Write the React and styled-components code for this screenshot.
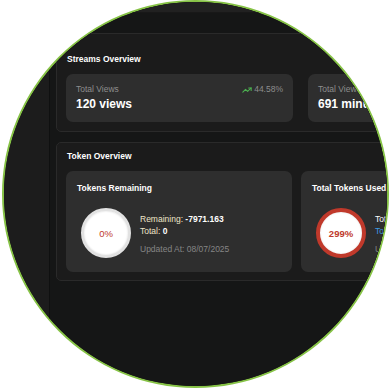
import React from 'react'
import styled, { createGlobalStyle } from 'styled-components'
import { TrendingUp } from 'lucide-react'

const GlobalStyle = createGlobalStyle`
  html, body {
    margin: 0;
    padding: 0;
    background: #ffffff;
  }
  body {
    font-family: "Liberation Sans", Arial, sans-serif;
  }
`

const streams = [
  { label: 'Total Views', value: '120 views', trend: '44.58%' },
  { label: 'Total Viewing Time', value: '691 minutes', trend: '12.40%' },
]

const App = () => {
  return (
    <>
      <GlobalStyle />
      <Lens>
        <Screen>
          <Sidebar />
          <Main>
            <TopBar />
            <Content>
              <Panel $top={20} $bottom={9}>
                <PanelTitle>Streams Overview</PanelTitle>
                <StatRow>
                  {streams.map((s) => (
                    <StatCard key={s.label}>
                      <StatHead>
                        <StatLabel>{s.label}</StatLabel>
                        <Trend>
                          <TrendingUp size={10} strokeWidth={2.6} color="#4caf50" />
                          {s.trend}
                        </Trend>
                      </StatHead>
                      <StatValue>{s.value}</StatValue>
                    </StatCard>
                  ))}
                </StatRow>
              </Panel>

              <Panel $top={8} $bottom={8}>
                <PanelTitle>Token Overview</PanelTitle>
                <TokenRow>
                  <TokenCard>
                    <CardTitle>Tokens Remaining</CardTitle>
                    <TokenBody>
                      <Gauge $ring="#e2e2e2" $width={3}>0%</Gauge>
                      <Info>
                        <Line>
                          Remaining: <b>-7971.163</b>
                        </Line>
                        <Line>
                          Total: <b>0</b>
                        </Line>
                        <Updated>Updated At: 08/07/2025</Updated>
                      </Info>
                    </TokenBody>
                  </TokenCard>
                  <TokenCard>
                    <CardTitle>Total Tokens Used</CardTitle>
                    <TokenBody>
                      <Gauge $ring="#c0392b" $width={4} $bold>299%</Gauge>
                      <Info>
                        <Line $color="#ffffff">
                          Total Used: <b>23816.837</b>
                        </Line>
                        <Line $color="#3d9be0">
                          Total Limit: <b>7971.163</b>
                        </Line>
                        <Updated>Updated At: 08/07/2025</Updated>
                      </Info>
                    </TokenBody>
                  </TokenCard>
                </TokenRow>
              </Panel>
            </Content>
          </Main>
        </Screen>
      </Lens>
    </>
  )
}

const Lens = styled.div`
  box-sizing: border-box;
  width: 387px;
  height: 388px;
  margin-left: 2px;
  border: 2px solid #86c246;
  border-radius: 50%;
  overflow: hidden;
  background: #151616;
`

const Screen = styled.div`
  display: flex;
  width: 760px;
  height: 400px;
  margin: -2px 0 0 -4px;
`

const Sidebar = styled.div`
  flex: 0 0 49px;
  background: #1c1c1c;
  border-right: 1px solid #0f1010;
`

const Main = styled.div`
  flex: 1;
  display: flex;
  flex-direction: column;
  background: #151616;
`

const TopBar = styled.div`
  height: 12px;
  background: #212121;
  border-bottom: 1px solid #181818;
`

const Content = styled.div`
  display: flex;
  flex-direction: column;
  gap: 10px;
  padding: 20px 0 0 6px;
`

const Panel = styled.section`
  box-sizing: border-box;
  width: 680px;
  padding: ${(p) => p.$top}px 9px ${(p) => p.$bottom}px 9px;
  background: #1b1b1b;
  border: 1px solid #2a2a2a;
  border-radius: 5px;
`

const PanelTitle = styled.h2`
  margin: 0 0 10px 1px;
  font-size: 8.5px;
  line-height: 10px;
  font-weight: 700;
  color: #ffffff;
`

const StatRow = styled.div`
  display: flex;
  gap: 15px;
`

const StatCard = styled.div`
  box-sizing: border-box;
  width: 227px;
  height: 48px;
  padding: 10px 10px 0 10px;
  background: #2e2e2e;
  border-radius: 7px;
`

const StatHead = styled.div`
  display: flex;
  justify-content: space-between;
  align-items: center;
`

const StatLabel = styled.span`
  font-size: 8.5px;
  line-height: 11px;
  color: #8d8d8d;
`

const Trend = styled.span`
  display: flex;
  align-items: center;
  gap: 2px;
  font-size: 8.5px;
  line-height: 11px;
  color: #8d8d8d;
`

const StatValue = styled.div`
  margin-top: 2px;
  font-size: 12px;
  line-height: 14px;
  font-weight: 700;
  color: #ffffff;
`

const TokenRow = styled.div`
  display: flex;
  gap: 9px;
`

const TokenCard = styled.div`
  box-sizing: border-box;
  width: 226px;
  height: 101px;
  padding: 12px 11px 0 11px;
  background: #2e2e2e;
  border-radius: 7px;
`

const CardTitle = styled.h3`
  margin: 0;
  font-size: 8.5px;
  line-height: 10px;
  font-weight: 700;
  color: #ffffff;
`

const TokenBody = styled.div`
  display: flex;
  align-items: center;
  gap: 9px;
  margin-top: 15px;
  padding-left: 4px;
`

const Gauge = styled.div`
  box-sizing: border-box;
  flex: 0 0 50px;
  width: 50px;
  height: 50px;
  display: flex;
  align-items: center;
  justify-content: center;
  border-radius: 50%;
  background: #ffffff;
  border: ${(p) => p.$width}px solid ${(p) => p.$ring};
  box-shadow: inset 0 0 2px rgba(0, 0, 0, 0.15);
  font-size: 9.5px;
  font-weight: ${(p) => (p.$bold ? 700 : 400)};
  color: #c0392b;
`

const Info = styled.div`
  display: flex;
  flex-direction: column;
  padding-top: 2px;
`

const Line = styled.div`
  font-size: 8.5px;
  line-height: 12px;
  color: ${(p) => p.$color || '#efe5c8'};
  white-space: nowrap;
  b {
    color: #ffffff;
    font-weight: 700;
  }
`

const Updated = styled.div`
  margin-top: 6px;
  font-size: 8.5px;
  line-height: 12px;
  color: #858585;
  white-space: nowrap;
`

export default App
